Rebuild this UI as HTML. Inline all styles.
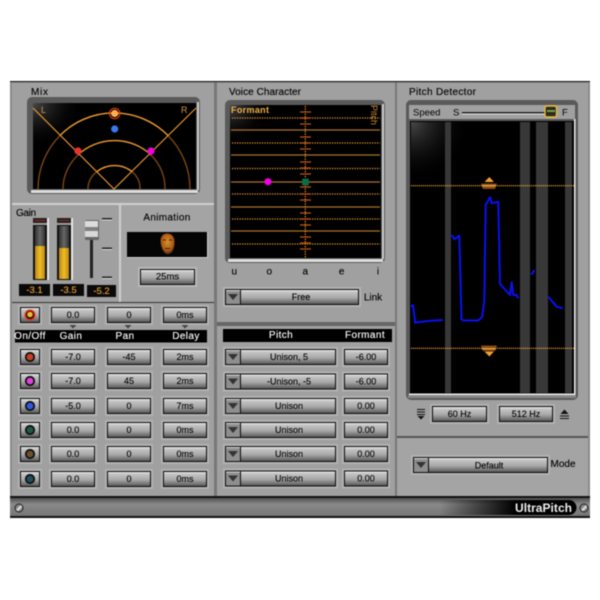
<!DOCTYPE html>
<html><head><meta charset="utf-8"><style>
html,body{margin:0;padding:0;background:#fff;width:600px;height:600px;overflow:hidden}
svg{display:block;filter:blur(.4px)}
text{font-family:"Liberation Sans",sans-serif}
.t{font-size:9px;fill:#000;text-anchor:middle;dominant-baseline:central;stroke:#000;stroke-width:.12}
.h{font-size:10px;fill:#000;stroke:#000;stroke-width:.12}
.w{font-size:10px;fill:#fff;text-anchor:middle;letter-spacing:.4px;dominant-baseline:central;stroke:#fff;stroke-width:.12}
.o{font-size:9.500px;fill:#f0a838;text-anchor:middle;dominant-baseline:central;stroke:#f0a838;stroke-width:.1}
</style></head><body>
<svg width="600" height="600" viewBox="0 0 600 600" xmlns="http://www.w3.org/2000/svg">
<defs>
<linearGradient id="b" x1="0" y1="0" x2="0" y2="1"><stop offset="0" stop-color="#ececec"/><stop offset=".15" stop-color="#c4c4c4"/><stop offset=".55" stop-color="#a8a8a8"/><stop offset="1" stop-color="#5a5a5a"/></linearGradient>
<linearGradient id="bar" x1="0" y1="0" x2="0" y2="1"><stop offset="0" stop-color="#505050"/><stop offset=".35" stop-color="#8a8a8a"/><stop offset="1" stop-color="#757575"/></linearGradient>
<linearGradient id="pill" x1="0" y1="0" x2="1" y2="0"><stop offset="0" stop-color="#000" stop-opacity="0"/><stop offset=".55" stop-color="#000"/><stop offset="1" stop-color="#000"/></linearGradient>
<linearGradient id="y" x1="0" y1="0" x2="1" y2="0"><stop offset="0" stop-color="#b88a14"/><stop offset=".5" stop-color="#f0bc24"/><stop offset="1" stop-color="#b88a14"/></linearGradient>
<linearGradient id="dk" x1="0" y1="0" x2="1" y2="0"><stop offset="0" stop-color="#333"/><stop offset=".5" stop-color="#666"/><stop offset="1" stop-color="#333"/></linearGradient>
<radialGradient id="gl" cx="0" cy="0" r="1"><stop offset="0" stop-color="#4a4a4a"/><stop offset="1" stop-color="#000" stop-opacity="0"/></radialGradient>
<radialGradient id="face" cx=".5" cy=".4" r=".6"><stop offset="0" stop-color="#d89030"/><stop offset=".7" stop-color="#a85a14"/><stop offset="1" stop-color="#502808"/></radialGradient>
<g id="btn"><rect x="-2" y="-2" width="48" height="20" fill="#b2b2b2"/><rect x="0" y="0" width="44" height="16" fill="#0a0a0a"/><rect x="1" y="1" width="42" height="14" fill="url(#b)"/></g>
<g id="led"><rect x="-2" y="-2" width="24" height="20" fill="#b2b2b2"/><rect x="0" y="0" width="20" height="16" fill="#0a0a0a"/><rect x="1" y="1" width="18" height="14" fill="url(#b)"/></g>
<g id="dd"><rect x="-2" y="-2" width="115" height="20" fill="#b2b2b2"/><rect x="0" y="0" width="111" height="16" fill="#0a0a0a"/><rect x="16" y="1" width="94" height="14" fill="url(#b)"/><rect x="1" y="1" width="14" height="14" fill="#8e8e8e"/><rect x="1" y="1" width="14" height="1" fill="#ddd"/><path d="M3 5H13L8 11Z" fill="#333"/></g>
<g id="dl"><rect x="-2" y="-2" width="138" height="20" fill="#b2b2b2"/><rect x="0" y="0" width="134" height="16" fill="#0a0a0a"/><rect x="16" y="1" width="117" height="14" fill="url(#b)"/><rect x="1" y="1" width="14" height="14" fill="#8e8e8e"/><rect x="1" y="1" width="14" height="1" fill="#ddd"/><path d="M3 5H13L8 11Z" fill="#333"/></g>
<g id="screw"><circle r="4.500" fill="#222"/><circle r="3.500" fill="#888"/><path d="M-3 2L2-3L3-1L-1 3Z" fill="#ddd"/></g>
</defs>

<rect x="10" y="81" width="580" height="437" fill="#111"/>
<rect x="10" y="82" width="580" height="416" fill="#8a8a8a"/>
<!-- panels -->
<rect x="12" y="83" width="202" height="120" fill="#a0a0a0"/>
<rect x="12" y="205" width="107" height="97" fill="#a0a0a0"/>
<rect x="121" y="205" width="93" height="97" fill="#a4a4a4"/>
<rect x="12" y="303" width="202" height="193" fill="#a0a0a0"/>
<rect x="217" y="83" width="178" height="239" fill="#a0a0a0"/>
<rect x="217" y="326" width="178" height="171" fill="#a0a0a0"/>
<rect x="397" y="83" width="191" height="353" fill="#a0a0a0"/>
<rect x="397" y="438" width="191" height="58" fill="#a4a4a4"/>
<rect x="12" y="203" width="202" height="2" fill="#d0d0d0"/>
<rect x="12" y="302" width="202" height="1" fill="#333"/>
<rect x="119" y="205" width="2" height="97" fill="#d0d0d0"/>
<rect x="214" y="82" width="3" height="415" fill="#777"/>
<rect x="395" y="82" width="2" height="415" fill="#777"/>
<rect x="217" y="322" width="178" height="4" fill="#666"/>
<rect x="397" y="436" width="191" height="2" fill="#555"/>
<rect x="10" y="496" width="580" height="2" fill="#111"/>
<!-- bottom bar -->
<rect x="10" y="498" width="580" height="18" fill="url(#bar)"/>
<path d="M440 500H569A7.500 7.500 0 0 1 569 515H440Z" fill="url(#pill)"/>
<text x="515" y="512" font-size="12" font-weight="bold" fill="#eee" textLength="57">UltraPitch</text>
<use href="#screw" x="19" y="508"/><use href="#screw" x="584" y="508"/>

<!-- Mix -->
<text class="h" x="31" y="95" textLength="17">Mix</text>
<rect x="27" y="97" width="173" height="97" rx="5" fill="#5a5a5a"/>
<rect x="31" y="190" width="167" height="3" fill="#ddd"/>
<rect x="197" y="102" width="2" height="88" fill="#ccc"/>
<rect x="33" y="103" width="163" height="86" fill="#000"/>
<rect x="33" y="103" width="50" height="45" fill="url(#gl)"/>
<g fill="none">
<path d="M38 189A76 76 0 0 1 60 135.500M168 135.500A76 76 0 0 1 190 189" stroke="#7a4614" stroke-width="1.400"/>
<path d="M60 135.500A76 76 0 0 1 168 135.500" stroke="#f09c30" stroke-width="1.400"/>
<path d="M63 189A51 48 0 0 1 78 155M151 155A51 48 0 0 1 165 189" stroke="#7a4614" stroke-width="1.400"/>
<path d="M78 155A51 48 0 0 1 151 155" stroke="#f09c30" stroke-width="1.400"/>
<path d="M88 189A26 23 0 0 1 97 171.600M132 171.600A26 23 0 0 1 140 189" stroke="#7a4614" stroke-width="1.400"/>
<path d="M97 171.600A26 23 0 0 1 132 171.600" stroke="#f09c30" stroke-width="1.400"/>
<path d="M114 189L33 108M114 189L196 108" stroke="#f09c30" stroke-width="1.100"/>
</g>
<text x="41" y="113" font-size="9" fill="#d89440">L</text>
<text x="181" y="113" font-size="9" fill="#d89440">R</text>
<circle cx="114.700" cy="113.500" r="5.200" fill="none" stroke="#e03a10" stroke-width="1.200"/>
<circle cx="114.700" cy="113.500" r="3.600" fill="#ffb050"/>
<circle cx="114.700" cy="129" r="3.600" fill="#3a78f0"/>
<circle cx="78" cy="151" r="3.600" fill="#f03030"/>
<circle cx="151" cy="151" r="3.600" fill="#f000e0"/>

<!-- Gain -->
<text class="h" x="16" y="216" textLength="20">Gain</text>
<rect x="33" y="218" width="15" height="5" fill="#2a2020"/><rect x="35" y="220" width="10" height="1" fill="#8a2a1a"/>
<rect x="57" y="218" width="15" height="5" fill="#2a2020"/><rect x="59" y="220" width="10" height="1" fill="#8a2a1a"/>
<rect x="33" y="225" width="14" height="55" fill="#111"/><rect x="47" y="218" width="2" height="62" fill="#e8e8e8"/>
<rect x="57" y="225" width="14" height="55" fill="#111"/><rect x="71" y="218" width="2" height="62" fill="#e8e8e8"/>
<rect x="35" y="226" width="10" height="20" fill="url(#dk)"/><rect x="35" y="246" width="10" height="33" fill="url(#y)"/>
<rect x="59" y="226" width="10" height="22" fill="url(#dk)"/><rect x="59" y="248" width="10" height="31" fill="url(#y)"/>
<rect x="19" y="284" width="31" height="12" fill="#0a0a0a"/><text class="o" x="34.500" y="290.500">-3.1</text>
<rect x="53" y="284" width="31" height="12" fill="#0a0a0a"/><text class="o" x="68.500" y="290.500">-3.5</text>
<rect x="87" y="285" width="29" height="12" fill="#0a0a0a"/><text class="o" x="101.500" y="291.500">-5.2</text>
<rect x="90" y="227" width="3" height="51" fill="#222"/>
<rect x="85" y="220" width="14" height="20" rx="1" fill="#666"/>
<rect x="85" y="221" width="13" height="6" fill="#dcdcdc"/><rect x="85" y="227" width="13" height="4" fill="#808080"/><rect x="85" y="231" width="13" height="6" fill="#d8d8d8"/>
<rect x="102" y="218" width="10" height="1.500" fill="#222"/><rect x="102" y="247.500" width="10" height="1.500" fill="#222"/><rect x="102" y="276.500" width="10" height="1.500" fill="#222"/>
<rect x="102" y="219.500" width="10" height="1" fill="#ddd"/><rect x="102" y="249" width="10" height="1" fill="#ddd"/><rect x="102" y="278" width="10" height="1" fill="#ddd"/>

<!-- Animation -->
<text x="167" y="218" class="t" style="font-size:10px;letter-spacing:.3px">Animation</text>
<rect x="127" y="232" width="81" height="26" fill="#ccc"/>
<rect x="127" y="232" width="80" height="25" fill="#050505"/>
<path d="M160.500 240Q161 234 167 233.500Q174 234 174.500 241Q175 249 171 253Q167 256 164 252Q160.500 247 160.500 240Z" fill="url(#face)"/>
<path d="M163 240H166M169 240H172" stroke="#4a2408" fill="none"/><path d="M165 248.500H170" stroke="#4a2408" fill="none"/>
<rect x="138" y="267" width="59" height="20" fill="#b8b8b8"/><rect x="140" y="269" width="55" height="16" fill="#0a0a0a"/><rect x="141" y="270" width="53" height="14" fill="url(#b)"/>
<text class="t" x="167.500" y="277" style="font-size:9.500px">25ms</text>

<!-- Mix table -->
<use href="#led" x="20" y="307"/>
<use href="#btn" x="51" y="307"/><use href="#btn" x="107" y="307"/><use href="#btn" x="163" y="307"/>
<text class="t" x="73" y="315">0.0</text><text class="t" x="129" y="315">0</text><text class="t" x="185" y="315">0ms</text>
<circle cx="30" cy="315" r="5.500" fill="#f02a10"/><circle cx="30" cy="315" r="4" fill="#111"/><circle cx="30" cy="314.500" r="2.800" fill="#f0b830"/>
<path d="M69.500 325H76.500L73 328.500ZM124.500 325H131.500L128 328.500ZM181.500 325H188.500L185 328.500Z" fill="#444"/>
<rect x="15" y="330" width="192" height="12.500" fill="#000"/>
<text class="w" x="30" y="336.500">On/Off</text><text class="w" x="71" y="336.500">Gain</text><text class="w" x="125" y="336.500">Pan</text><text class="w" x="186" y="336.500">Delay</text>

<use href="#led" x="20" y="349"/><use href="#btn" x="51" y="349"/><use href="#btn" x="107" y="349"/><use href="#btn" x="163" y="349"/>
<use href="#led" x="20" y="373"/><use href="#btn" x="51" y="373"/><use href="#btn" x="107" y="373"/><use href="#btn" x="163" y="373"/>
<use href="#led" x="20" y="398"/><use href="#btn" x="51" y="398"/><use href="#btn" x="107" y="398"/><use href="#btn" x="163" y="398"/>
<use href="#led" x="20" y="422"/><use href="#btn" x="51" y="422"/><use href="#btn" x="107" y="422"/><use href="#btn" x="163" y="422"/>
<use href="#led" x="20" y="446"/><use href="#btn" x="51" y="446"/><use href="#btn" x="107" y="446"/><use href="#btn" x="163" y="446"/>
<use href="#led" x="20" y="471"/><use href="#btn" x="51" y="471"/><use href="#btn" x="107" y="471"/><use href="#btn" x="163" y="471"/>
<g stroke="#111" stroke-width="1.800">
<circle cx="30" cy="357" r="4.200" fill="#c84020"/><circle cx="30" cy="381" r="4.200" fill="#e040e0"/><circle cx="30" cy="406" r="4.200" fill="#3058e0"/><circle cx="30" cy="430" r="4.200" fill="#1f5a40"/><circle cx="30" cy="454" r="4.200" fill="#6a5030"/><circle cx="30" cy="479" r="4.200" fill="#1f5060"/>
</g>
<text class="t" x="73" y="357">-7.0</text><text class="t" x="129" y="357">-45</text><text class="t" x="185" y="357">2ms</text>
<text class="t" x="73" y="381">-7.0</text><text class="t" x="129" y="381">45</text><text class="t" x="185" y="381">2ms</text>
<text class="t" x="73" y="406">-5.0</text><text class="t" x="129" y="406">0</text><text class="t" x="185" y="406">7ms</text>
<text class="t" x="73" y="430">0.0</text><text class="t" x="129" y="430">0</text><text class="t" x="185" y="430">0ms</text>
<text class="t" x="73" y="454">0.0</text><text class="t" x="129" y="454">0</text><text class="t" x="185" y="454">0ms</text>
<text class="t" x="73" y="479">0.0</text><text class="t" x="129" y="479">0</text><text class="t" x="185" y="479">0ms</text>

<!-- Voice Character -->
<text class="h" x="229" y="95" textLength="72">Voice Character</text>
<rect x="225" y="100" width="160" height="163" rx="5" fill="#5a5a5a"/>
<rect x="228" y="259" width="155" height="3" fill="#ddd"/><rect x="382" y="104" width="2" height="155" fill="#ccc"/>
<rect x="230" y="105" width="151" height="153" fill="#000"/>
<rect x="230" y="105" width="40" height="40" fill="url(#gl)"/>
<g stroke="#f09c30" stroke-width="1.200" fill="none">
<path d="M232 118H380M232 143H380M232 168.500H380M232 194H380M232 219H380M232 244H380" stroke-dasharray="1.200 1.300"/>
<path d="M231 130H380M231 155H380M231 182H380M231 207H380M231 231H380" stroke="#a8702c"/>
<path d="M305.300 106V258" stroke-dasharray="1.200 1.300"/>
<path d="M300 112H311M300 118H311M300 124H311M300 137H311M300 143H311M300 149H311M300 162H311M300 168H311M300 174H311M300 187H311M300 194H311M300 200H311M300 213H311M300 219H311M300 225H311M300 237H311M300 243H311M300 249H311" stroke="#c05410"/>
</g>
<text x="231" y="113" font-size="9" font-weight="bold" fill="#f0b048" textLength="38">Formant</text>
<text font-size="9" fill="#d08c34" transform="translate(371,105) rotate(90)">Pitch</text>
<circle cx="268" cy="181.700" r="3.600" fill="#f000e0"/>
<rect x="302" y="178.500" width="7" height="7" rx="1.500" fill="#0f6a46"/>
<text class="t" x="234.300" y="272" style="font-size:10px">u</text><text class="t" x="269.300" y="272" style="font-size:10px">o</text><text class="t" x="305.300" y="272" style="font-size:10px">a</text><text class="t" x="341.700" y="272" style="font-size:10px">e</text><text class="t" x="378" y="272" style="font-size:10px">i</text>
<use href="#dl" x="225" y="289"/>
<text class="t" x="301" y="297">Free</text>
<text class="t" x="373" y="298" style="font-size:10px">Link</text>

<!-- Pitch table -->
<rect x="223" y="329" width="169" height="13" fill="#000"/>
<text class="w" x="281" y="335.500">Pitch</text><text class="w" x="365" y="335.500">Formant</text>
<use href="#dd" x="225" y="349"/><use href="#btn" x="344" y="349"/>
<use href="#dd" x="225" y="373.500"/><use href="#btn" x="344" y="373.500"/>
<use href="#dd" x="225" y="398"/><use href="#btn" x="344" y="398"/>
<use href="#dd" x="225" y="422"/><use href="#btn" x="344" y="422"/>
<use href="#dd" x="225" y="446"/><use href="#btn" x="344" y="446"/>
<use href="#dd" x="225" y="470.500"/><use href="#btn" x="344" y="470.500"/>
<text class="t" x="289" y="357">Unison, 5</text><text class="t" x="366" y="357">-6.00</text>
<text class="t" x="289" y="381.500">-Unison, -5</text><text class="t" x="366" y="381.500">-6.00</text>
<text class="t" x="289" y="406">Unison</text><text class="t" x="366" y="406">0.00</text>
<text class="t" x="289" y="430">Unison</text><text class="t" x="366" y="430">0.00</text>
<text class="t" x="289" y="454">Unison</text><text class="t" x="366" y="454">0.00</text>
<text class="t" x="289" y="478.500">Unison</text><text class="t" x="366" y="478.500">0.00</text>

<!-- Pitch Detector -->
<text class="h" x="409" y="95" textLength="67">Pitch Detector</text>
<rect x="406" y="100" width="172" height="300" rx="5" fill="#5a5a5a"/>
<rect x="409" y="105" width="166" height="14" fill="#a0a0a0"/>
<text x="413" y="115.500" font-size="9.500" fill="#000">Speed</text>
<text x="453" y="115.500" font-size="9.500" fill="#000">S</text>
<text x="562" y="115.500" font-size="9.500" fill="#000">F</text>
<rect x="462" y="112" width="84" height="1.500" fill="#222"/><rect x="462" y="113.500" width="84" height="1" fill="#eee"/>
<rect x="545" y="106" width="11.500" height="11" rx="2" fill="#2a2a20" stroke="#f0bc30" stroke-width="1.400"/>
<rect x="547" y="110" width="8" height="2" fill="#7aa050"/>
<rect x="410" y="121" width="164" height="272.500" fill="#000"/>
<rect x="574" y="119" width="1.500" height="276" fill="#eee"/>
<rect x="409" y="393.500" width="166.500" height="1.500" fill="#eee"/>
<rect x="408" y="395" width="168" height="3" fill="#888"/>
<rect x="411" y="122" width="60" height="60" fill="url(#gl)"/>
<g fill="#383838"><rect x="445" y="122" width="6" height="271"/><rect x="520" y="122" width="10" height="271"/><rect x="536" y="122" width="12" height="271"/><rect x="565" y="122" width="7" height="271"/></g>
<path d="M411 185.700H574M411 348.300H574" stroke="#f09c30" stroke-width="1.200" stroke-dasharray="1.200 .8" fill="none"/>
<path d="M484.500 182L489.300 177L494 182Z" fill="#f0a030"/><path d="M481 183.500H497L495 189H483Z" fill="#8a4a14"/><rect x="482" y="185" width="14" height="1.500" fill="#e0a040"/>
<path d="M484.500 351.500L489.300 356.500L494 351.500Z" fill="#f0a030"/><path d="M481 345.500H497L495 351H483Z" fill="#8a4a14"/><rect x="482" y="348" width="14" height="1.500" fill="#e0a040"/>
<g fill="none" stroke="#0a10f0" stroke-width="2" stroke-linejoin="round">
<path d="M411 306.700L413 305L415 321L415 322.700L420 322L428 321L443 320"/>
<path d="M451.700 235L454.300 239.300L459.300 235.700L461.500 319.300L463.300 320.500L478.300 320.500L482.300 316.700L484.300 300L485.700 205L490 197.300L491.700 203.300L498.300 201.700L500 284L510 295L511.700 282.300L513.300 295L516.700 295L518.300 298.300"/>
<path d="M530.700 274.300L533 273L534.300 270"/>
<path d="M548.300 296.700L556.700 306.700L562.700 308.300"/>
</g>
<path d="M417 409.500H425M417 412H425M417 414.500H425" stroke="#111" fill="none"/><path d="M417.500 416H424.500L421 419.500Z" fill="#111"/>
<path d="M560.500 414L564.500 409.500L568.500 414Z" fill="#111"/><path d="M560 416H569M560 418.500H569" stroke="#111" fill="none"/>
<rect x="430" y="404" width="59" height="20" fill="#b2b2b2"/><rect x="432" y="406" width="55" height="16" fill="#0a0a0a"/><rect x="433" y="407" width="53" height="14" fill="url(#b)"/>
<rect x="497" y="404" width="58" height="20" fill="#b2b2b2"/><rect x="499" y="406" width="54" height="16" fill="#0a0a0a"/><rect x="500" y="407" width="52" height="14" fill="url(#b)"/>
<text class="t" x="459.500" y="414">60 Hz</text><text class="t" x="526" y="414">512 Hz</text>

<!-- Mode -->
<rect x="411" y="455" width="139" height="20" fill="#b2b2b2"/>
<rect x="413" y="457" width="135" height="16" fill="#0a0a0a"/>
<rect x="429" y="458" width="118" height="14" fill="url(#b)"/><rect x="414" y="458" width="14" height="14" fill="#8e8e8e"/><rect x="414" y="458" width="14" height="1" fill="#ddd"/><path d="M416 462H426L421 468Z" fill="#333"/>
<text class="t" x="489" y="465.500">Default</text>
<text class="t" x="563" y="464.500" style="font-size:10px">Mode</text>
</svg>
</body></html>
